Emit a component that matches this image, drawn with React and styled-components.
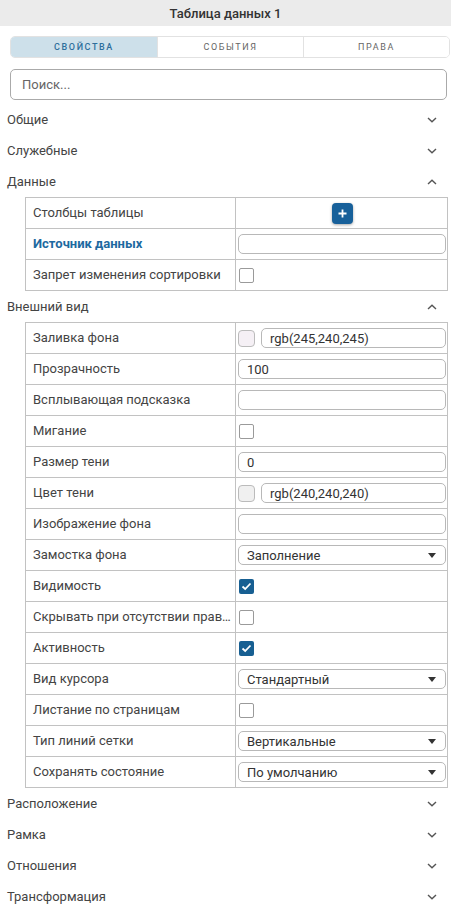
import React from 'react'
import styled, { createGlobalStyle } from 'styled-components'

const GlobalStyle = createGlobalStyle`
  html, body {
    margin: 0;
    padding: 0;
    background: #fff;
  }
  body {
    font-family: Roboto, "Noto Sans", "Liberation Sans", sans-serif;
    color: #444;
  }
`

const Panel = styled.div`
  width: 451px;
  background: #fff;
`

const Header = styled.div`
  height: 26px;
  background: #ebebeb;
  display: flex;
  align-items: center;
  justify-content: center;
  font-size: 13px;
  font-weight: 500;
  color: #333;
`

const Tabs = styled.div`
  display: grid;
  grid-template-columns: repeat(3, 1fr);
  margin: 10px 1px 0 10px;
  height: 22px;
  border: 1px solid #e2e2e2;
  border-radius: 5px;
  overflow: hidden;
  box-sizing: border-box;
`

const Tab = styled.div`
  display: flex;
  align-items: center;
  justify-content: center;
  font-size: 9px;
  letter-spacing: 1.6px;
  text-transform: uppercase;
  color: ${p => (p.$active ? '#2e6f9c' : '#666')};
  background: ${p => (p.$active ? '#cde0ea' : '#fff')};
  font-weight: ${p => (p.$active ? 500 : 400)};
  & + & {
    border-left: 1px solid #e2e2e2;
  }
`

const Search = styled.div`
  margin: 11px 4px 0 10px;
  height: 31px;
  border: 1px solid #aaa;
  border-radius: 5px;
  box-sizing: border-box;
  display: flex;
  align-items: center;
  padding-left: 11px;
  font-size: 13px;
  color: #666;
`

const Sections = styled.div`
  margin-top: 4px;
`

const SectionHead = styled.div`
  height: 31px;
  display: flex;
  align-items: center;
  justify-content: space-between;
  padding: 0 14px 0 7px;
  font-size: 13px;
  color: #444;
`

const Table = styled.div`
  margin: 0 3px 0 25px;
  border: 1px solid #c2c2c2;
  display: grid;
  grid-template-columns: 210px 1fr;
`

const Label = styled.div`
  height: 30px;
  line-height: 30px;
  padding: 0 4px 0 7px;
  font-size: 13px;
  color: ${p => (p.$accent ? '#1d69a0' : '#444')};
  font-weight: ${p => (p.$accent ? 700 : 400)};
  border-right: 1px solid #c2c2c2;
  border-top: ${p => (p.$first ? 'none' : '1px solid #c2c2c2')};
  white-space: nowrap;
  overflow: hidden;
  text-overflow: ellipsis;
`

const Value = styled.div`
  height: 30px;
  display: flex;
  align-items: center;
  gap: 6px;
  padding: 0 1px 0 2px;
  border-top: ${p => (p.$first ? 'none' : '1px solid #c2c2c2')};
  justify-content: ${p => (p.$center ? 'center' : 'flex-start')};
  min-width: 0;
`

const Field = styled.div`
  flex: 1;
  height: 20px;
  border: 1px solid #b8b8b8;
  border-radius: 5px;
  box-sizing: border-box;
  display: flex;
  align-items: center;
  justify-content: space-between;
  padding: 0 9px 0 8px;
  font-size: 13px;
  color: #333;
`

const Swatch = styled.div`
  width: 17px;
  height: 17px;
  border: 1px solid #bbb;
  border-radius: 4px;
  box-sizing: border-box;
  background: ${p => p.$color};
  flex: none;
`

const Check = styled.div`
  width: 15px;
  height: 15px;
  box-sizing: border-box;
  border-radius: 2px;
  margin-left: 1px;
  border: ${p => (p.$on ? 'none' : '1.5px solid #9a9a9a')};
  background: ${p => (p.$on ? '#175f92' : '#fff')};
  display: flex;
  align-items: center;
  justify-content: center;
`

const AddButton = styled.div`
  width: 21px;
  height: 21px;
  border-radius: 4px;
  background: #17609a;
  box-shadow: 0 1px 3px rgba(0, 0, 0, 0.35);
  display: flex;
  align-items: center;
  justify-content: center;
`

const Chevron = ({ up }) => (
  <svg width="10" height="6" viewBox="0 0 10 6">
    <path
      d={up ? 'M1 5 L5 1.2 L9 5' : 'M1 1 L5 4.8 L9 1'}
      fill="none"
      stroke="#555"
      strokeWidth="1.4"
    />
  </svg>
)

const Caret = () => (
  <svg width="8" height="5" viewBox="0 0 8 5">
    <path d="M0 0 L8 0 L4 5 Z" fill="#333" />
  </svg>
)

const Tick = () => (
  <svg width="11" height="9" viewBox="0 0 11 9">
    <path d="M1.5 4.5 L4.2 7 L9.5 1.5" fill="none" stroke="#fff" strokeWidth="1.8" />
  </svg>
)

const Plus = () => (
  <svg width="9" height="9" viewBox="0 0 9 9">
    <path d="M4.5 0.5 V8.5 M0.5 4.5 H8.5" stroke="#fff" strokeWidth="1.8" />
  </svg>
)

const renderValue = v => {
  switch (v.type) {
    case 'add':
      return <AddButton><Plus /></AddButton>
    case 'check':
      return <Check $on={v.on}>{v.on && <Tick />}</Check>
    case 'color':
      return (
        <>
          <Swatch $color={v.text} />
          <Field>{v.text}</Field>
        </>
      )
    case 'select':
      return <Field>{v.text}<Caret /></Field>
    default:
      return <Field>{v.text}</Field>
  }
}

const PropTable = ({ rows }) => (
  <Table>
    {rows.map((row, i) => (
      <React.Fragment key={row.label}>
        <Label $first={i === 0} $accent={row.accent}>{row.label}</Label>
        <Value $first={i === 0} $center={row.value.type === 'add'}>
          {renderValue(row.value)}
        </Value>
      </React.Fragment>
    ))}
  </Table>
)

const dataRows = [
  { label: 'Столбцы таблицы', value: { type: 'add' } },
  { label: 'Источник данных', accent: true, value: { type: 'input', text: '' } },
  { label: 'Запрет изменения сортировки', value: { type: 'check', on: false } }
]

const viewRows = [
  { label: 'Заливка фона', value: { type: 'color', text: 'rgb(245,240,245)' } },
  { label: 'Прозрачность', value: { type: 'input', text: '100' } },
  { label: 'Всплывающая подсказка', value: { type: 'input', text: '' } },
  { label: 'Мигание', value: { type: 'check', on: false } },
  { label: 'Размер тени', value: { type: 'input', text: '0' } },
  { label: 'Цвет тени', value: { type: 'color', text: 'rgb(240,240,240)' } },
  { label: 'Изображение фона', value: { type: 'input', text: '' } },
  { label: 'Замостка фона', value: { type: 'select', text: 'Заполнение' } },
  { label: 'Видимость', value: { type: 'check', on: true } },
  { label: 'Скрывать при отсутствии прав доступа', value: { type: 'check', on: false } },
  { label: 'Активность', value: { type: 'check', on: true } },
  { label: 'Вид курсора', value: { type: 'select', text: 'Стандартный' } },
  { label: 'Листание по страницам', value: { type: 'check', on: false } },
  { label: 'Тип линий сетки', value: { type: 'select', text: 'Вертикальные' } },
  { label: 'Сохранять состояние', value: { type: 'select', text: 'По умолчанию' } }
]

const Section = ({ title, open, children }) => (
  <>
    <SectionHead>
      {title}
      <Chevron up={open} />
    </SectionHead>
    {open && children}
  </>
)

export default function App () {
  return (
    <Panel>
      <GlobalStyle />
      <Header>Таблица данных 1</Header>
      <Tabs>
        <Tab $active>Свойства</Tab>
        <Tab>События</Tab>
        <Tab>Права</Tab>
      </Tabs>
      <Search>Поиск...</Search>
      <Sections>
        <Section title="Общие" />
        <Section title="Служебные" />
        <Section title="Данные" open>
          <PropTable rows={dataRows} />
        </Section>
        <Section title="Внешний вид" open>
          <PropTable rows={viewRows} />
        </Section>
        <Section title="Расположение" />
        <Section title="Рамка" />
        <Section title="Отношения" />
        <Section title="Трансформация" />
      </Sections>
    </Panel>
  )
}
